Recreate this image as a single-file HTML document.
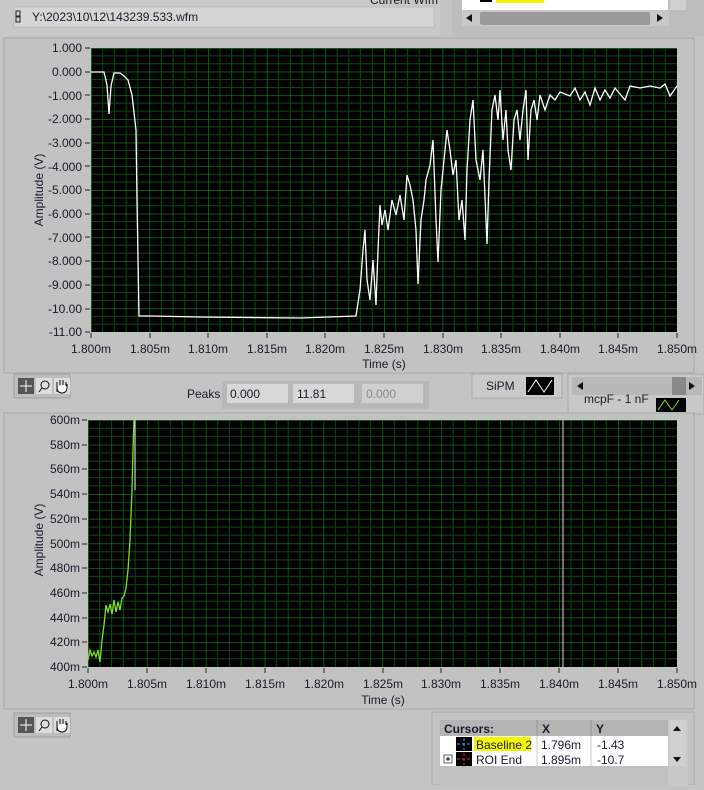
<!DOCTYPE html>
<html><head><meta charset="utf-8"><style>
body{margin:0;width:704px;height:785px;overflow:hidden;background:#c4c4c4;font-family:"Liberation Sans",sans-serif;}
svg text{font-family:"Liberation Sans",sans-serif;font-size:12px;fill:#1a1a2a}
</style></head><body>
<svg width="704" height="785" xmlns="http://www.w3.org/2000/svg">
<defs>
<pattern id="gt" x="91" y="48" width="58.6" height="23.67" patternUnits="userSpaceOnUse">
<path d="M11.72 0V23.67M23.44 0V23.67M35.16 0V23.67M46.88 0V23.67M0 7.89H58.6M0 15.78H58.6" stroke="#0b4a10" stroke-width="1" fill="none"/>
<path d="M0 0V23.67M0 0H58.6" stroke="#178a1f" stroke-width="1.2" fill="none"/>
</pattern>
<pattern id="gb" x="88" y="420" width="58.9" height="24.7" patternUnits="userSpaceOnUse">
<path d="M11.78 0V24.7M23.56 0V24.7M35.34 0V24.7M47.12 0V24.7M0 8.23H58.9M0 16.46H58.9" stroke="#0b4a10" stroke-width="1" fill="none"/>
<path d="M0 0V24.7M0 0H58.9" stroke="#178a1f" stroke-width="1.2" fill="none"/>
</pattern>
<g id="hand"><path d="M3 14V7M3 7V4M6 7V2M9 7V2M12 8V4M3 9c0 4 2 6 5 6s5-2 5-5V6" stroke="#111" fill="#fff" stroke-width="1"/></g>
</defs>
<!-- top region -->
<rect x="0" y="0" width="440" height="36" fill="#c8c8c8"/>
<text x="370" y="4">Current Wfm</text>
<rect x="14" y="7" width="420" height="20" fill="#d6d6d6" stroke="#bcbcbc"/>
<text x="32" y="21">Y:\2023\10\12\143239.533.wfm</text>
<rect x="16" y="11" width="4" height="5" fill="none" stroke="#222" stroke-width="1"/>
<rect x="16" y="17" width="4" height="5" fill="none" stroke="#222" stroke-width="1"/>
<rect x="452" y="0" width="252" height="36" fill="#bdbdbd"/>
<rect x="462" y="0" width="206" height="10" fill="#fff"/>
<rect x="480" y="0" width="12" height="2" fill="#000"/>
<rect x="496" y="0" width="48" height="3" fill="#f5f500"/>
<rect x="462" y="10" width="207" height="16" fill="#c8c8c8"/>
<rect x="480" y="12" width="170" height="13" fill="#9a9a9a" rx="2"/>
<path d="M466 18l6-4v8z M657 14l6 4-6 4z" fill="#111"/>
<rect x="670" y="0" width="16" height="10" fill="#d0d0d0"/>
<!-- top graph panel -->
<rect x="4" y="38" width="690" height="335" fill="#c2c2c2" stroke="#a8a8a8"/>
<rect x="91" y="48" width="586" height="284" fill="#000"/>
<rect x="91" y="48" width="586" height="284" fill="url(#gt)"/>
<path d="M85 48h5M85 72h5M85 95h5M85 119h5M85 143h5M85 166h5M85 190h5M85 214h5M85 237h5M85 261h5M85 285h5M85 309h5M85 332h5 M91 333v5M150 333v5M208 333v5M267 333v5M325 333v5M384 333v5M443 333v5M501 333v5M560 333v5M618 333v5M677 333v5" stroke="#222"/>
<g text-anchor="end">
<text x="82" y="52">1.000</text><text x="82" y="76">0.000</text><text x="82" y="100">-1.000</text><text x="82" y="123">-2.000</text><text x="82" y="147">-3.000</text><text x="82" y="171">-4.000</text><text x="82" y="194">-5.000</text><text x="82" y="218">-6.000</text><text x="82" y="242">-7.000</text><text x="82" y="265">-8.000</text><text x="82" y="289">-9.000</text><text x="82" y="313">-10.00</text><text x="82" y="336">-11.00</text>
</g>
<g text-anchor="middle">
<text x="91" y="353">1.800m</text><text x="150" y="353">1.805m</text><text x="208" y="353">1.810m</text><text x="267" y="353">1.815m</text><text x="325" y="353">1.820m</text><text x="384" y="353">1.825m</text><text x="443" y="353">1.830m</text><text x="501" y="353">1.835m</text><text x="560" y="353">1.840m</text><text x="618" y="353">1.845m</text><text x="677" y="353">1.850m</text>
<text x="384" y="368">Time (s)</text>
<text transform="translate(43,190) rotate(-90)">Amplitude (V)</text>
</g>
<polyline fill="none" stroke="#fff" stroke-width="1.3" points="91,72 104,72 107,85 109,114 111,86 114,73 120,73 124,76 128,80 132,95 136,130 137,200 139,316 150,316 200,317 300,318 356,316 360,290 363,250 365,230 367,280 370,300 373,260 376,305 378,250 380,205 382,225 385,210 388,230 392,200 396,215 400,195 404,220 407,175 410,185 413,200 416,230 418,284 421,220 424,200 426,180 430,165 433,140 436,220 438,262 441,190 444,160 447,130 450,150 453,175 456,160 459,220 462,200 465,240 467,170 470,120 473,100 476,160 480,180 483,150 487,244 489,180 492,110 495,95 498,120 500,90 503,140 506,110 508,150 511,170 514,120 517,110 520,140 523,110 526,90 528,160 531,110 534,100 537,120 540,95 545,110 550,95 555,100 560,92 570,96 575,88 580,100 585,92 590,105 595,88 600,100 605,90 610,98 615,88 625,100 630,86 640,88 650,86 660,88 665,84 670,96 677,86"/>
<!-- toolbar row -->
<rect x="14" y="374" width="56" height="24" fill="#bdbdbd" stroke="#a0a0a0"/>
<rect x="18" y="378" width="16" height="16" fill="#555"/>
<path d="M26 380v12M20 386h12" stroke="#fff"/>
<rect x="36" y="378" width="16" height="16" fill="#ddd"/>
<circle cx="45" cy="385" r="4" fill="none" stroke="#111"/>
<path d="M42 388l-3 4" stroke="#111"/>
<rect x="54" y="378" width="16" height="16" fill="#ddd"/>
<use href="#hand" x="54" y="378"/>
<text x="187" y="398">Peaks</text>
<rect x="222" y="381" width="207" height="28" fill="#b8b8b8"/>
<rect x="227" y="384" width="61" height="19" fill="#d8d8d8"/><text x="230" y="398">0.000</text>
<rect x="293" y="384" width="61" height="19" fill="#d8d8d8"/><text x="297" y="398">11.81</text>
<rect x="362" y="384" width="61" height="19" fill="#d0d0d0"/><text x="366" y="398" style="fill:#8a8a8a">0.000</text>
<rect x="472" y="374" width="90" height="24" fill="#cacaca" stroke="#aaa"/>
<text x="486" y="390">SiPM</text>
<rect x="526" y="377" width="28" height="18" fill="#000"/>
<path d="M528 392l8-12 8 12 8-12" stroke="#fff" fill="none"/>
<rect x="568" y="374" width="136" height="40" fill="#c8c8c8" stroke="#aaa"/>
<rect x="572" y="377" width="130" height="18" fill="#b8b8b8"/>
<rect x="672" y="377" width="14" height="18" fill="#888"/>
<path d="M577 386l6-4v8z M689 382l6 4-6 4z" fill="#111"/>
<text x="584" y="403">mcpF - 1 nF</text>
<rect x="656" y="398" width="30" height="14" fill="#000"/>
<path d="M658 410l7-10 7 10 7-10" stroke="#7fe020" fill="none"/>
<!-- bottom graph panel -->
<rect x="4" y="413" width="690" height="296" fill="#c2c2c2" stroke="#a8a8a8"/>
<rect x="88" y="420" width="589" height="247" fill="#000"/>
<rect x="88" y="420" width="589" height="247" fill="url(#gb)"/>
<path d="M82 420h5M82 445h5M82 469h5M82 494h5M82 519h5M82 544h5M82 568h5M82 593h5M82 618h5M82 642h5M82 667h5 M88 668v5M147 668v5M206 668v5M265 668v5M324 668v5M383 668v5M441 668v5M500 668v5M559 668v5M618 668v5M677 668v5" stroke="#222"/>
<g text-anchor="end">
<text x="80" y="424">600m</text><text x="80" y="449">580m</text><text x="80" y="473">560m</text><text x="80" y="498">540m</text><text x="80" y="523">520m</text><text x="80" y="548">500m</text><text x="80" y="572">480m</text><text x="80" y="597">460m</text><text x="80" y="622">440m</text><text x="80" y="646">420m</text><text x="80" y="671">400m</text>
</g>
<g text-anchor="middle">
<text x="88" y="688">1.800m</text><text x="147" y="688">1.805m</text><text x="206" y="688">1.810m</text><text x="265" y="688">1.815m</text><text x="324" y="688">1.820m</text><text x="383" y="688">1.825m</text><text x="441" y="688">1.830m</text><text x="500" y="688">1.835m</text><text x="559" y="688">1.840m</text><text x="618" y="688">1.845m</text><text x="677" y="688">1.850m</text>
<text x="383" y="704">Time (s)</text>
<text transform="translate(43,540) rotate(-90)">Amplitude (V)</text>
</g>
<line x1="563" y1="420" x2="563" y2="667" stroke="#ddd"/>
<line x1="135" y1="420" x2="135" y2="490" stroke="#eee"/>
<polyline fill="none" stroke="#7fe020" stroke-width="1.3" points="88,660 90,650 92,656 94,652 96,657 98,650 100,662 102,640 104,625 106,605 108,612 110,604 112,614 114,600 116,612 118,602 120,610 122,598 124,596 126,588 128,570 130,540 132,490 133,450 134,420"/>
<!-- bottom toolbar -->
<rect x="14" y="713" width="56" height="24" fill="#bdbdbd" stroke="#a0a0a0"/>
<rect x="18" y="717" width="16" height="16" fill="#555"/>
<path d="M26 719v12M20 725h12" stroke="#fff"/>
<rect x="36" y="717" width="16" height="16" fill="#ddd"/>
<circle cx="45" cy="724" r="4" fill="none" stroke="#111"/>
<path d="M42 727l-3 4" stroke="#111"/>
<rect x="54" y="717" width="16" height="16" fill="#ddd"/>
<use href="#hand" x="54" y="717"/>
<!-- cursors table -->
<rect x="432" y="712" width="262" height="73" fill="#c4c4c4" stroke="#aaa"/>
<rect x="440" y="720" width="248" height="65" fill="#c8c8c8"/>
<rect x="440" y="720" width="228" height="16" fill="#b4b4b4"/>
<text x="444" y="733" font-weight="bold">Cursors:</text>
<text x="542" y="733" font-weight="bold">X</text>
<text x="596" y="733" font-weight="bold">Y</text>
<line x1="537" y1="720" x2="537" y2="766" stroke="#999"/>
<line x1="591" y1="720" x2="591" y2="766" stroke="#999"/>
<rect x="440" y="736" width="228" height="30" fill="#fff"/>
<line x1="537" y1="736" x2="537" y2="766" stroke="#ccc"/><line x1="591" y1="736" x2="591" y2="766" stroke="#ccc"/>
<rect x="456" y="737" width="16" height="14" fill="#000"/>
<path d="M464 738v12M457 744h14" stroke="#3aa0ff" stroke-dasharray="3 2"/>
<rect x="474" y="737" width="57" height="14" fill="#f5f500"/>
<text x="476" y="749">Baseline 2</text>
<text x="541" y="749">1.796m</text><text x="597" y="749">-1.43</text>
<rect x="444" y="755" width="8" height="8" fill="#fff" stroke="#666"/>
<path d="M446 759h4M448 757v4" stroke="#000"/>
<rect x="456" y="752" width="16" height="14" fill="#000"/>
<path d="M464 753v12M457 759h14" stroke="#f22" stroke-dasharray="3 2"/>
<text x="476" y="764">ROI End</text>
<text x="541" y="764">1.895m</text><text x="597" y="764">-10.7</text>
<rect x="440" y="766" width="228" height="19" fill="#c0c0c0"/>
<rect x="669" y="720" width="17" height="46" fill="#d0d0d0"/>
<path d="M673 731l4-5 4 5z M673 757l4 5 4-5z" fill="#111"/>
</svg>
</body></html>
